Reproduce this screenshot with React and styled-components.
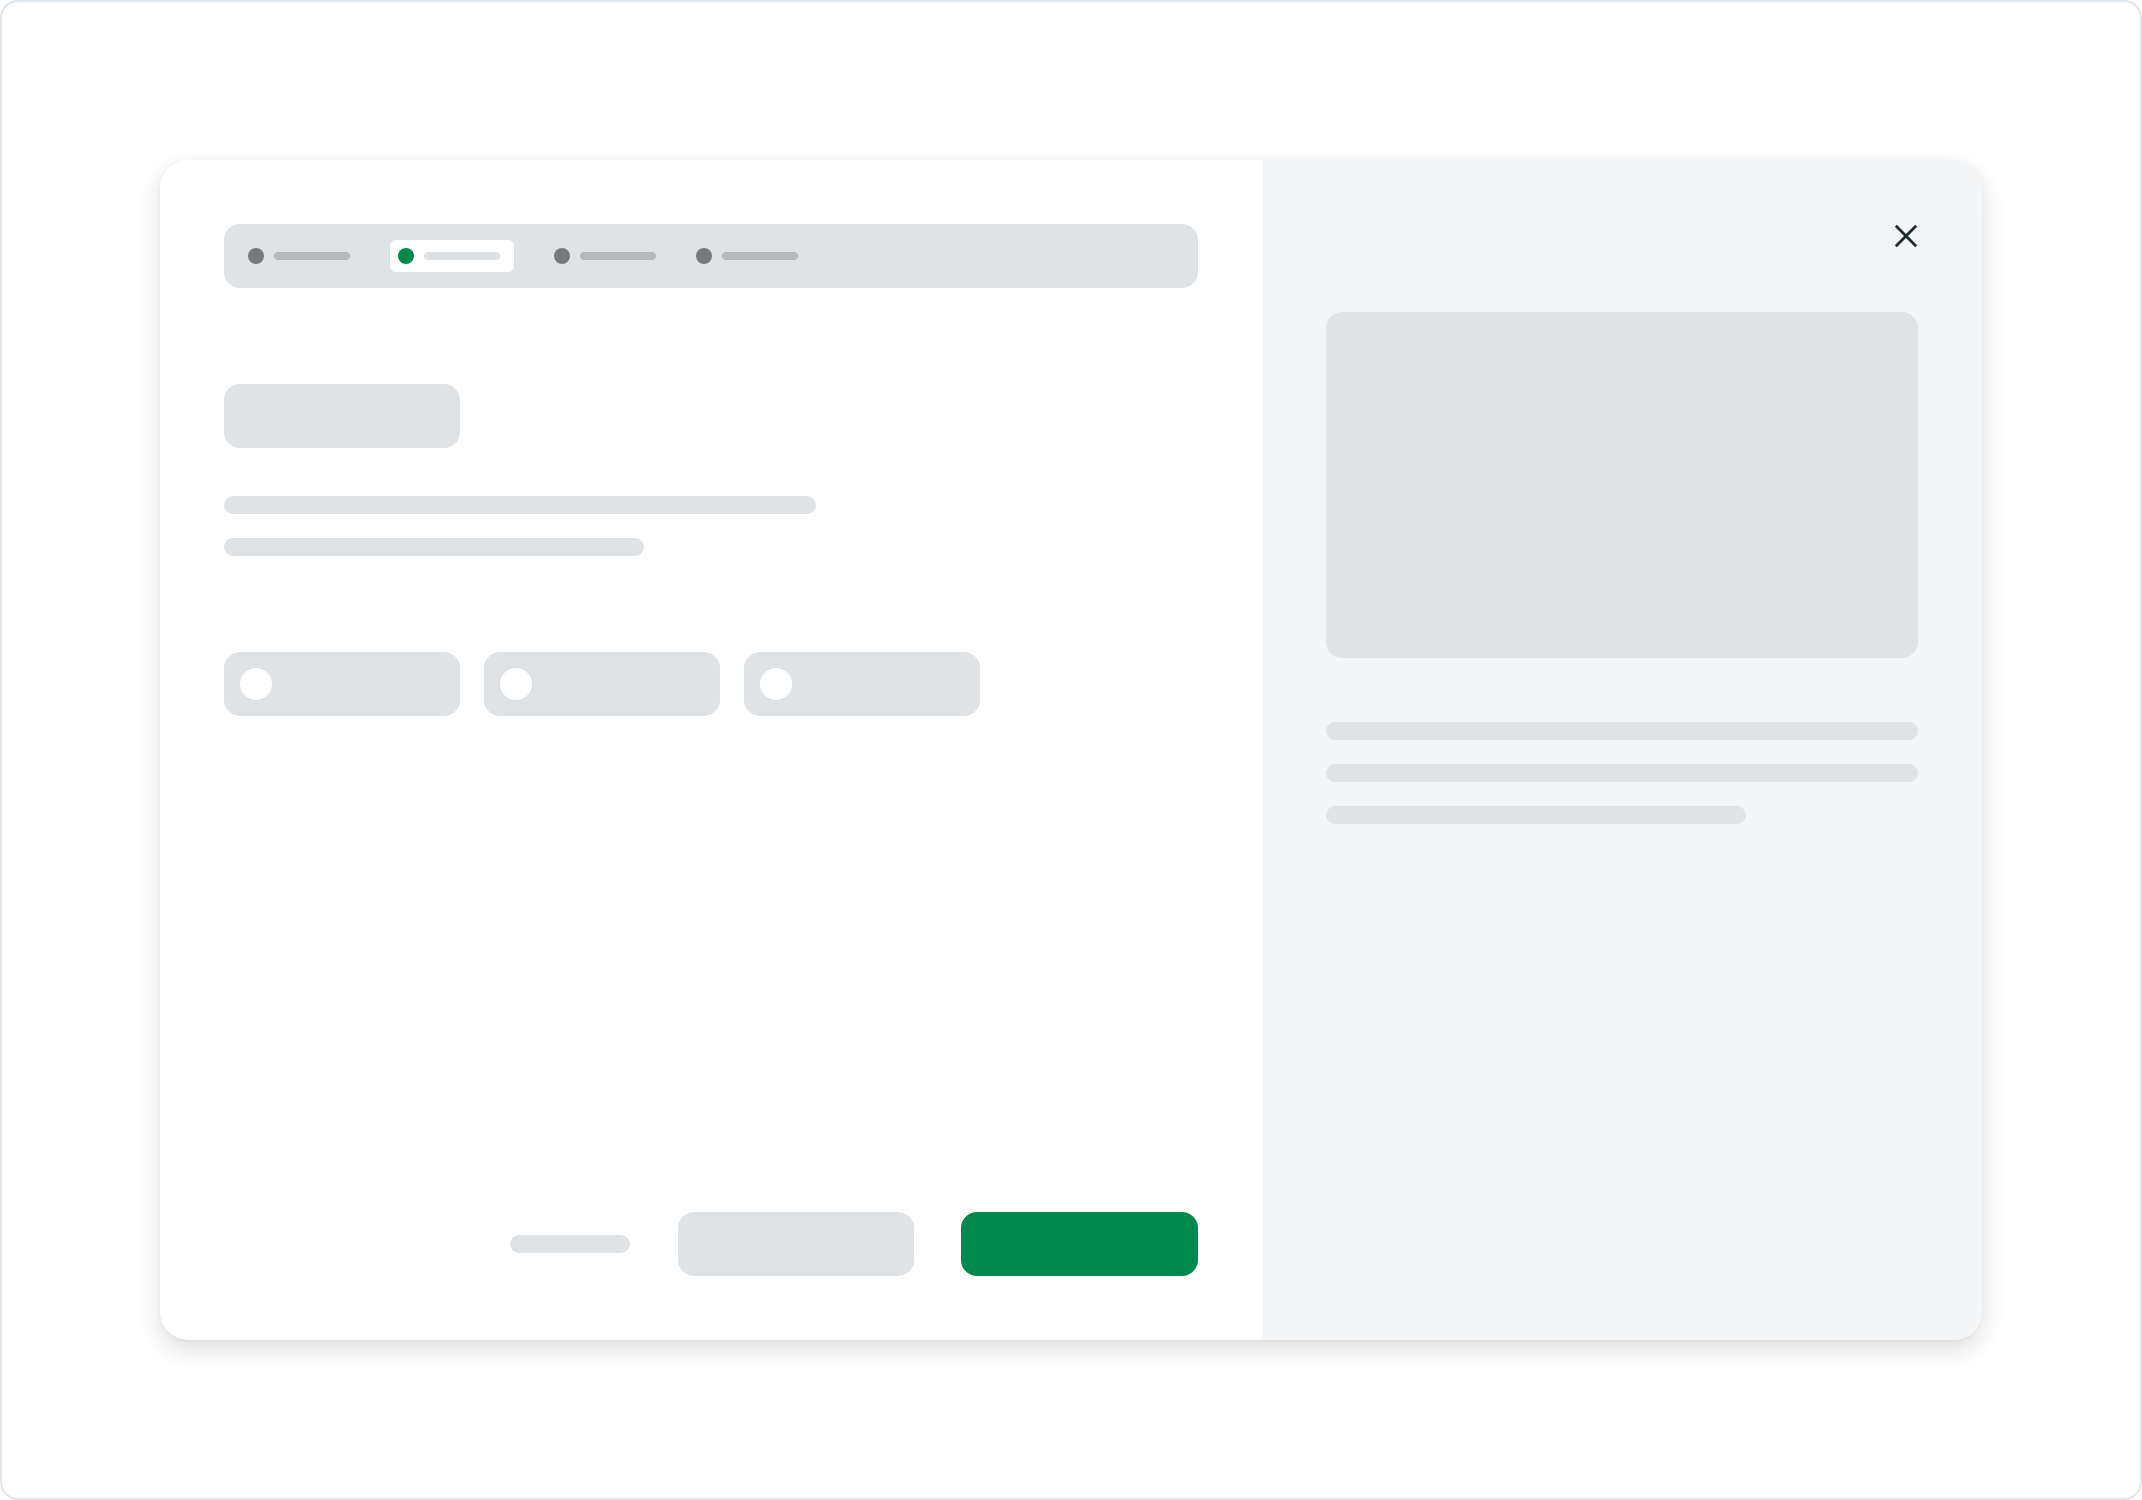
import React from 'react';
import styled, { createGlobalStyle } from 'styled-components';

const GlobalStyle = createGlobalStyle`
  html, body {
    margin: 0;
    padding: 0;
    background: #ffffff;
    font-family: 'Liberation Sans', Arial, sans-serif;
  }
  * { box-sizing: border-box; }
`

const Frame = styled.div`
  width: 2142px;
  height: 1500px;
  border: 2px solid #dfe6ed;
  border-radius: 18px;
  padding: 158px;
  display: flex;
  background: #ffffff;
`

const Card = styled.div`
  flex: 1;
  display: grid;
  grid-template-columns: 1fr 720px;
  border-radius: 28px;
  overflow: hidden;
  background: #ffffff;
  box-shadow: 0 10px 26px rgba(0, 0, 0, 0.13), 0 1px 4px rgba(0, 0, 0, 0.05);
`

const MainPane = styled.div`
  display: flex;
  flex-direction: column;
  padding: 64px;
`

const SidePane = styled.div`
  display: flex;
  flex-direction: column;
  padding: 64px;
  background: #f4f5f7;
`

const Stepper = styled.div`
  height: 64px;
  display: flex;
  align-items: center;
  gap: 40px;
  padding: 0 24px;
  background: #e0e3e6;
  border-radius: 16px;
`

const Step = styled.div`
  display: flex;
  align-items: center;
  gap: 10px;
  height: 32px;
  padding: ${p => (p.active ? '0 14px 0 8px' : '0')};
  background: ${p => (p.active ? '#ffffff' : 'transparent')};
  border-radius: 6px;
`

const StepDot = styled.span`
  width: 16px;
  height: 16px;
  border-radius: 50%;
  background: ${p => (p.active ? '#00884f' : '#787878')};
`

const StepLabel = styled.span`
  width: 76px;
  height: 8px;
  border-radius: 4px;
  background: ${p => (p.active ? '#e0e3e6' : '#b8b8b8')};
`

const TitleBlock = styled.div`
  width: 236px;
  height: 64px;
  margin-top: 96px;
  border-radius: 16px;
  background: #e0e3e6;
`

const TextLines = styled.div`
  display: flex;
  flex-direction: column;
  gap: 24px;
  margin-top: ${p => p.top || 0}px;
`

const TextLine = styled.div`
  width: ${p => p.w}px;
  height: 18px;
  border-radius: 9px;
  background: #e0e3e6;
`

const Options = styled.div`
  display: flex;
  gap: 24px;
  margin-top: 96px;
`

const Option = styled.div`
  width: 236px;
  height: 64px;
  display: flex;
  align-items: center;
  padding-left: 16px;
  border-radius: 16px;
  background: #e0e3e6;
`

const Radio = styled.span`
  width: 32px;
  height: 32px;
  border-radius: 50%;
  background: #ffffff;
`

const Footer = styled.div`
  margin-top: auto;
  display: flex;
  justify-content: flex-end;
  align-items: center;
  gap: 47px;
`

const LinkLine = styled.div`
  width: 120px;
  height: 18px;
  margin-right: 1px;
  border-radius: 9px;
  background: #e0e3e6;
`

const Button = styled.div`
  width: ${p => (p.primary ? 237 : 236)}px;
  height: 64px;
  border-radius: 16px;
  background: ${p => (p.primary ? '#00884f' : '#e0e3e6')};
`

const CloseRow = styled.div`
  display: flex;
  justify-content: flex-end;
  height: 24px;
`

const CloseButton = styled.button`
  width: 24px;
  height: 24px;
  padding: 0;
  border: 0;
  background: none;
  color: #1f2933;
  display: flex;
`

const Media = styled.div`
  height: 346px;
  margin-top: 64px;
  border-radius: 16px;
  background: #e0e3e6;
`

const steps = [false, true, false, false]

export default function App() {
  return (
    <>
      <GlobalStyle />
      <Frame>
        <Card>
          <MainPane>
            <Stepper>
              {steps.map((active, i) => (
                <Step key={i} active={active}>
                  <StepDot active={active} />
                  <StepLabel active={active} />
                </Step>
              ))}
            </Stepper>
            <TitleBlock />
            <TextLines top={48}>
              <TextLine w={592} />
              <TextLine w={420} />
            </TextLines>
            <Options>
              {[0, 1, 2].map(i => (
                <Option key={i}>
                  <Radio />
                </Option>
              ))}
            </Options>
            <Footer>
              <LinkLine />
              <Button />
              <Button primary />
            </Footer>
          </MainPane>
          <SidePane>
            <CloseRow>
              <CloseButton aria-label="close">
                <svg width="24" height="24" viewBox="0 0 24 24" fill="none" stroke="currentColor" strokeWidth="2.8" strokeLinecap="square">
                  <path d="M2.8 2.8 L21.2 21.2 M21.2 2.8 L2.8 21.2" />
                </svg>
              </CloseButton>
            </CloseRow>
            <Media />
            <TextLines top={64}>
              <TextLine w={592} />
              <TextLine w={592} />
              <TextLine w={420} />
            </TextLines>
          </SidePane>
        </Card>
      </Frame>
    </>
  );
}
